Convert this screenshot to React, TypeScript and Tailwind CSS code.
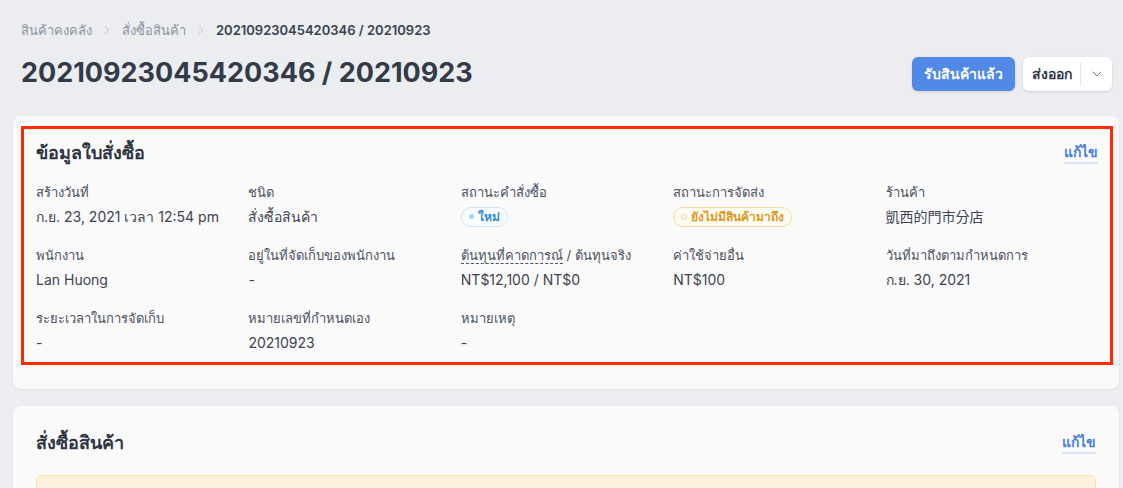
import { ChevronDown, ChevronRight } from "lucide-react";

type Field = {
  label: string;
  value?: string;
  badge?: "new" | "pending";
  dashed?: boolean;
};

const fields: Field[] = [
  { label: "สร้างวันที่", value: "ก.ย. 23, 2021 เวลา 12:54 pm" },
  { label: "ชนิด", value: "สั่งซื้อสินค้า" },
  { label: "สถานะคำสั่งซื้อ", badge: "new" },
  { label: "สถานะการจัดส่ง", badge: "pending" },
  { label: "ร้านค้า", value: "凱西的門市分店" },
  { label: "พนักงาน", value: "Lan Huong" },
  { label: "อยู่ในที่จัดเก็บของพนักงาน", value: "-" },
  { label: "ต้นทุนที่คาดการณ์", value: "NT$12,100 / NT$0", dashed: true },
  { label: "ค่าใช้จ่ายอื่น", value: "NT$100" },
  { label: "วันที่มาถึงตามกำหนดการ", value: "ก.ย. 30, 2021" },
  { label: "ระยะเวลาในการจัดเก็บ", value: "-" },
  { label: "หมายเลขที่กำหนดเอง", value: "20210923" },
  { label: "หมายเหตุ", value: "-" },
];

const Badge = ({ kind }: { kind: "new" | "pending" }) => {
  if (kind === "new") {
    return (
      <span className="inline-flex items-center gap-1 h-[20px] px-[7px] rounded-full border border-[#cfe6f8] bg-[#f7fbfe] text-[12px] font-semibold text-[#2f8fcf]">
        <span className="w-[5px] h-[5px] rounded-full bg-[#a9d3f0]" />
        ใหม่
      </span>
    );
  }
  return (
    <span className="inline-flex items-center gap-1 h-[20px] px-[7px] rounded-full border border-[#f9d99b] bg-[#fffbf2] text-[12px] font-semibold text-[#d99a1e]">
      <span className="w-[6px] h-[6px] rounded-full border border-[#f6d38f]" />
      ยังไม่มีสินค้ามาถึง
    </span>
  );
};

const EditLink = () => (
  <a className="text-sm font-semibold text-[#4a80e0] leading-5 border-b-2 border-[#d6e3f8] cursor-pointer">
    แก้ไข
  </a>
);

export default function App() {
  return (
    <div
      className="min-h-screen bg-[#ecedf0] pl-[13px] pr-[4px] pt-5 text-[#333a48]"
      style={{ fontFamily: "Inter, 'Noto Sans', 'Noto Sans CJK TC', sans-serif" }}
    >
      {/* breadcrumb */}
      <div className="px-2 flex items-center gap-2 text-[13px] leading-5">
        <span className="text-[#8a93a2]">สินค้าคงคลัง</span>
        <ChevronRight className="w-3.5 h-3.5 text-[#b5bbc6]" strokeWidth={1.5} />
        <span className="text-[#8a93a2]">สั่งซื้อสินค้า</span>
        <ChevronRight className="w-3.5 h-3.5 text-[#b5bbc6]" strokeWidth={1.5} />
        <span className="font-semibold text-[#3a4150]">20210923045420346 / 20210923</span>
      </div>

      {/* title + actions */}
      <div className="pl-2 pr-[7px] mt-[15px] flex items-center justify-between">
        <h1 className="text-[27px] leading-9 font-bold text-[#333a48]">
          20210923045420346 / 20210923
        </h1>
        <div className="flex items-center gap-2 pt-[2px]">
          <button className="h-[34px] px-[12px] rounded-md bg-[#5189e6] text-white text-sm font-bold shadow-sm">
            รับสินค้าแล้ว
          </button>
          <div className="h-[34px] flex items-center rounded-md bg-white shadow-sm">
            <span className="pl-[9px] pr-[8px] text-sm font-semibold text-[#333a48]">ส่งออก</span>
            <span className="w-px h-6 bg-[#e3e5ea]" />
            <span className="w-[31px] flex items-center justify-center">
              <ChevronDown className="w-4 h-4 text-[#6b7280]" strokeWidth={1.5} />
            </span>
          </div>
        </div>
      </div>

      {/* purchase order info card */}
      <div className="mt-[25px] rounded-lg bg-[#fafafa] shadow-[0_1px_2px_rgba(0,0,0,0.06)] pl-2 pr-[6px] pt-[10px] pb-6">
        <div className="border-[3px] border-[#ff2a00] px-3 pt-[10px] pb-[9px]">
          <div className="flex items-center justify-between h-7">
            <h2 className="text-lg font-bold text-[#2f3542]">ข้อมูลใบสั่งซื้อ</h2>
            <EditLink />
          </div>
          <div className="mt-[15px] grid grid-cols-5 gap-y-[18px]">
            {fields.map((f, i) => (
              <div key={i} className="flex flex-col">
                <div className="text-[13px] leading-5 text-[#4a5262]">
                  {f.dashed ? (
                    <>
                      <span className="border-b border-dashed border-[#4a5262]">{f.label}</span>
                      {" / ต้นทุนจริง"}
                    </>
                  ) : (
                    f.label
                  )}
                </div>
                <div className="mt-1 h-[21px] flex items-center text-sm leading-5 text-[#3d4452]">
                  {f.badge ? <Badge kind={f.badge} /> : f.value}
                </div>
              </div>
            ))}
          </div>
        </div>
      </div>

      {/* purchase items card */}
      <div className="mt-[17px] rounded-lg bg-[#fafafa] shadow-[0_1px_2px_rgba(0,0,0,0.06)] px-[23px] pt-[23px] pb-6">
        <div className="flex items-center justify-between h-7">
          <h2 className="text-lg font-bold text-[#2f3542]">สั่งซื้อสินค้า</h2>
          <EditLink />
        </div>
        <div className="mt-[18px] h-24 rounded-md border border-[#fbe3a6] bg-[#fbf1dd]" />
      </div>
    </div>
  );
}
